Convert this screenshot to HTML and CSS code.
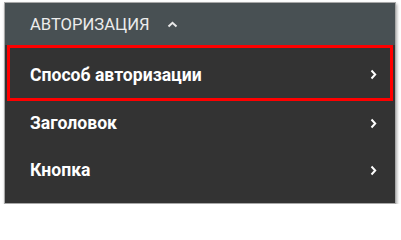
FILE: index.html
```html
<!DOCTYPE html>
<html lang="ru">
<head>
<meta charset="utf-8">
<link rel="stylesheet" href="styles.css">
</head>
<body>
<div class="panel">
  <div class="header">
    <span class="header-title">АВТОРИЗАЦИЯ</span>
    <svg class="chev-up" width="11" height="7" viewBox="0 0 11 7"><path d="M1.5 5.5 L5.5 1.8 L9.5 5.5" fill="none" stroke="#e8e8e8" stroke-width="2"/></svg>
  </div>
  <ul class="list">
    <li class="item active"><span>Способ авторизации</span>
      <svg class="chev-right" width="7" height="11" viewBox="0 0 7 11"><path d="M1.5 1.5 L5.2 5.5 L1.5 9.5" fill="none" stroke="#ffffff" stroke-width="2"/></svg></li>
    <li class="item"><span>Заголовок</span>
      <svg class="chev-right" width="7" height="11" viewBox="0 0 7 11"><path d="M1.5 1.5 L5.2 5.5 L1.5 9.5" fill="none" stroke="#ffffff" stroke-width="2"/></svg></li>
    <li class="item"><span>Кнопка</span>
      <svg class="chev-right" width="7" height="11" viewBox="0 0 7 11"><path d="M1.5 1.5 L5.2 5.5 L1.5 9.5" fill="none" stroke="#ffffff" stroke-width="2"/></svg></li>
  </ul>
</div>
</body>
</html>
```
FILE: styles.css
```css
html, body { margin: 0; padding: 0; background: #ffffff; }
body { font-family: Roboto, "Noto Sans", sans-serif; }
.panel {
  margin: 2px 0 0 4px;
  width: 392px;
  height: 202px;
  background: #333333;
  border: 1px solid #a8a8a8;
  box-shadow: 1px 2px 3px rgba(0,0,0,0.35);
  box-sizing: border-box;
}
.header {
  height: 42px;
  background: #485053;
  display: flex;
  align-items: center;
  padding-left: 25px;
  gap: 17px;
}
.header-title {
  color: #ececec;
  font-size: 16.6px;
}
.list { list-style: none; margin: 0; padding: 0; }
.item {
  display: flex;
  align-items: center;
  justify-content: space-between;
  height: 47px;
  padding: 0 18px 3px 25px;
  box-sizing: border-box;
  color: #ffffff;
  font-weight: 700;
  font-size: 17.6px;
}
.item.active {
  height: 56px;
  margin: 0 2px;
  padding: 3px 13px 0 20px;
  border: 3px solid #ff0000;
}
```
